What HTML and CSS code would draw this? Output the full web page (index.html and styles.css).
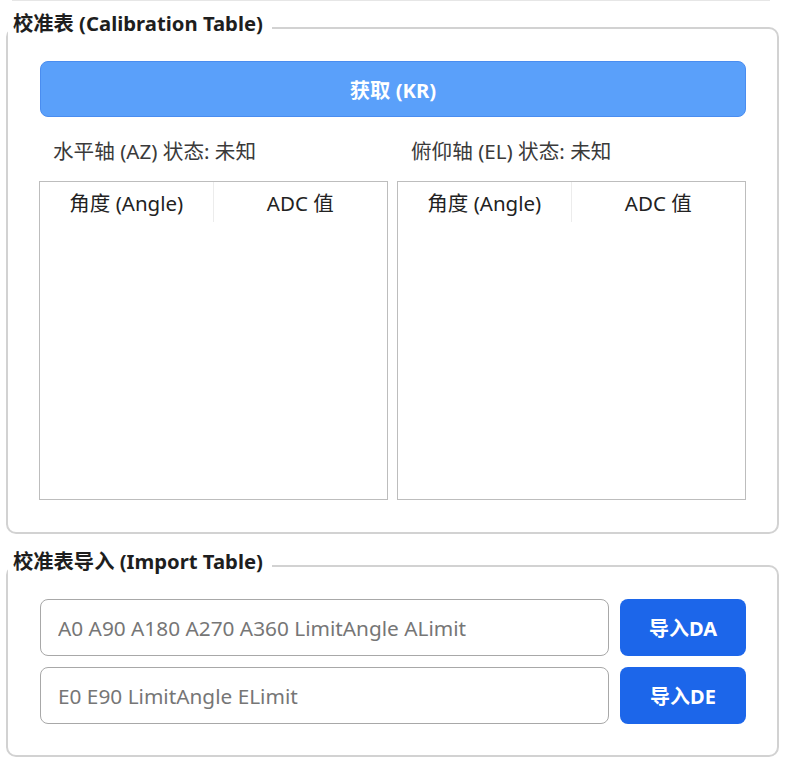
FILE: index.html
```html
<!DOCTYPE html>
<html lang="zh">
<head>
<meta charset="utf-8">
<title>校准表</title>
<link rel="stylesheet" href="styles.css">
</head>
<body>
<div class="top-rule"></div>
<fieldset class="group group-cal">
  <legend class="group-title">校准表 (Calibration Table)</legend>
  <div class="group-body">
    <button class="btn-fetch" type="button">获取 (KR)</button>
    <div class="axes">
      <div class="axis">
        <div class="axis-status">水平轴 (AZ) 状态: 未知</div>
        <div class="table-box">
          <div class="table-head">
            <div class="th">角度 (Angle)</div>
            <div class="th">ADC 值</div>
          </div>
        </div>
      </div>
      <div class="axis">
        <div class="axis-status">俯仰轴 (EL) 状态: 未知</div>
        <div class="table-box">
          <div class="table-head">
            <div class="th">角度 (Angle)</div>
            <div class="th">ADC 值</div>
          </div>
        </div>
      </div>
    </div>
  </div>
</fieldset>
<fieldset class="group group-import">
  <legend class="group-title">校准表导入 (Import Table)</legend>
  <div class="group-body import-body">
    <div class="import-row">
      <input class="import-input" type="text" placeholder="A0 A90 A180 A270 A360 LimitAngle ALimit">
      <button class="btn-import" type="button">导入DA</button>
    </div>
    <div class="import-row">
      <input class="import-input" type="text" placeholder="E0 E90 LimitAngle ELimit">
      <button class="btn-import" type="button">导入DE</button>
    </div>
  </div>
</fieldset>
</body>
</html>
```
FILE: styles.css
```css
* { box-sizing: border-box; }
html, body { margin: 0; padding: 0; background: #fff; }
body {
  font-family: "Noto Sans", "Noto Sans CJK SC", sans-serif;
  color: #222;
  width: 790px;
  height: 770px;
  overflow: hidden;
}
.top-rule {
  height: 1px;
  margin: 0 20px 0 12px;
  background: #e6e6e6;
}
.group {
  margin: 0 11px 0 6px;
  padding: 0;
  border: 2px solid #d2d2d2;
  border-radius: 10px;
  min-width: 0;
}
.group-cal { margin-top: 11px; height: 522px; }
.group-import { margin-top: 16px; height: 207px; }
.group-title {
  padding: 0 9px 9px 5px;
  margin: 0;
  font-size: 20.3px;
  line-height: 22px;
  font-weight: 700;
  color: #1e1e1e;
}
.group-body {
  padding: 18px 31px 0 32px;
}
.btn-fetch {
  display: block;
  width: 100%;
  height: 56px;
  border: 1px solid #4a8df0;
  border-radius: 8px;
  background: #5aa0fa;
  color: #fff;
  font-family: inherit;
  font-size: 20.3px;
  font-weight: 700;
  cursor: pointer;
}
.axes {
  display: grid;
  grid-template-columns: 349px 349px;
  column-gap: 9px;
  margin-left: -1px;
  margin-top: 22px;
}
.axis-status {
  padding-left: 14px;
  font-size: 20.6px;
  line-height: 24px;
  color: #3a3a3a;
}
.table-box {
  margin-top: 18px;
  height: 319px;
  border: 1.5px solid #bdbdbd;
  background: #fff;
}
.table-head {
  display: grid;
  grid-template-columns: 1fr 1fr;
}
.th {
  height: 40px;
  display: flex;
  align-items: center;
  justify-content: center;
  font-size: 20.5px;
  color: #222;
}
.th:first-child { border-right: 1px solid #ececec; }
.import-body {
  display: flex;
  flex-direction: column;
  gap: 11px;
}
.import-row {
  display: flex;
  gap: 11px;
}
.import-input {
  flex: 1;
  height: 57px;
  border: 1.5px solid #a8a8a8;
  border-radius: 8px;
  padding: 0 17px;
  font-family: inherit;
  font-size: 20.8px;
  color: #333;
  outline: none;
}
.import-input::placeholder { color: #767676; }
.btn-import {
  width: 126px;
  height: 57px;
  border: none;
  border-radius: 8px;
  background: #1c66ea;
  color: #fff;
  font-family: inherit;
  font-size: 20px;
  font-weight: 700;
  cursor: pointer;
}
```
